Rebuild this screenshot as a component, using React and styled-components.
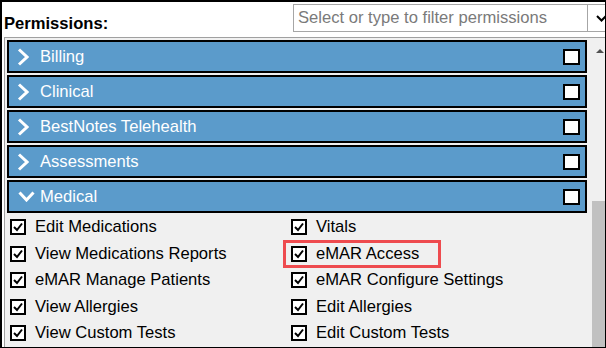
import React from "react";
import styled, { createGlobalStyle } from "styled-components";

const GlobalStyle = createGlobalStyle`
  html, body {
    margin: 0;
    padding: 0;
    background: #ffffff;
  }
  body {
    font-family: "Liberation Sans", Arial, sans-serif;
  }
`;

const groups = ["Billing", "Clinical", "BestNotes Telehealth", "Assessments"];

const medical = [
  { label: "Edit Medications" },
  { label: "Vitals" },
  { label: "View Medications Reports" },
  { label: "eMAR Access", highlight: true },
  { label: "eMAR Manage Patients" },
  { label: "eMAR Configure Settings" },
  { label: "View Allergies" },
  { label: "Edit Allergies" },
  { label: "View Custom Tests" },
  { label: "Edit Custom Tests" },
];

const App = () => {
  return (
    <>
      <GlobalStyle />
      <Frame>
        <TopBar>
          <Label>Permissions:</Label>
          <Select>
            <Placeholder>Select or type to filter permissions</Placeholder>
            <DropButton>
              <svg width="11" height="7" viewBox="0 0 11 7">
                <polyline points="1,1 5.5,5.5 10,1" fill="none" stroke="#000" strokeWidth="2" />
              </svg>
            </DropButton>
          </Select>
        </TopBar>

        <Panel>
          <List>
            {groups.map((g) => (
              <GroupHeader key={g}>
                <Chevron>
                  <svg width="12" height="18" viewBox="0 0 12 18">
                    <polyline points="2,1.5 10,9 2,16.5" fill="none" stroke="#fff" strokeWidth="3" />
                  </svg>
                </Chevron>
                <GroupTitle>{g}</GroupTitle>
                <HeaderBox />
              </GroupHeader>
            ))}

            <GroupHeader>
              <Chevron $open>
                <svg width="17" height="11" viewBox="0 0 17 11">
                  <polyline points="1.5,1.5 8.5,9 15.5,1.5" fill="none" stroke="#fff" strokeWidth="3" />
                </svg>
              </Chevron>
              <GroupTitle>Medical</GroupTitle>
              <HeaderBox />
            </GroupHeader>

            <Items>
              {medical.map((m) => (
                <Item key={m.label} $highlight={m.highlight}>
                  <Check>
                    <svg width="12" height="12" viewBox="0 0 12 12">
                      <polyline points="2,6 5,9 10,2.5" fill="none" stroke="#000" strokeWidth="2" />
                    </svg>
                  </Check>
                  <span>{m.label}</span>
                </Item>
              ))}
            </Items>
          </List>

          <ScrollBar>
            <ScrollArrow />
            <Thumb />
          </ScrollBar>
        </Panel>
      </Frame>
    </>
  );
};

const Frame = styled.div`
  width: 606px;
  height: 348px;
  box-sizing: border-box;
  border-style: solid;
  border-color: #000;
  border-width: 2px 1px 1px 2px;
  overflow: hidden;
  display: flex;
  flex-direction: column;
  background: #fff;
`;

const TopBar = styled.div`
  height: 35px;
  flex-shrink: 0;
  display: flex;
  align-items: flex-start;
  overflow: hidden;
`;

const Label = styled.div`
  width: 289px;
  flex-shrink: 0;
  padding: 13px 0 0 2px;
  font-size: 16.6px;
  line-height: 18px;
  font-weight: bold;
  color: #000;
`;

const Select = styled.div`
  margin-top: 2px;
  width: 330px;
  height: 28px;
  flex-shrink: 0;
  box-sizing: border-box;
  border: 1px solid #a6a6a6;
  display: flex;
  align-items: stretch;
`;

const Placeholder = styled.div`
  width: 293px;
  box-sizing: border-box;
  padding-left: 4px;
  display: flex;
  align-items: center;
  font-size: 16.6px;
  color: #7a7a7a;
  white-space: nowrap;
  overflow: hidden;
`;

const DropButton = styled.div`
  border-left: 1px solid #a6a6a6;
  padding-left: 8px;
  display: flex;
  align-items: center;
`;

const Panel = styled.div`
  flex: 1;
  margin-left: 2px;
  border-top: 1px solid #a0a0a0;
  border-left: 1px solid #a0a0a0;
  padding-left: 2px;
  background: #f0f0f0;
  display: grid;
  grid-template-columns: 580px 13px;
  column-gap: 5px;
  min-height: 0;
`;

const List = styled.div`
  padding-top: 2px;
  overflow: hidden;
`;

const GroupHeader = styled.div`
  height: 33px;
  box-sizing: border-box;
  margin-bottom: 2px;
  border: 2px solid #000;
  background: #5b9bcb;
  display: flex;
  align-items: center;
  padding: 0 5px 0 8px;
  color: #fff;
`;

const Chevron = styled.div`
  width: 23px;
  flex-shrink: 0;
  display: flex;
  align-items: center;
  padding-left: ${(p) => (p.$open ? "1px" : "0")};
  box-sizing: border-box;
  svg {
    display: block;
  }
`;

const GroupTitle = styled.div`
  flex: 1;
  font-size: 16.6px;
  line-height: 18px;
`;

const HeaderBox = styled.div`
  width: 17px;
  height: 16px;
  box-sizing: border-box;
  border: 2px solid #000;
  background: #fff;
`;

const Items = styled.div`
  display: grid;
  grid-template-columns: 281px 1fr;
  grid-auto-rows: 26.5px;
  padding-left: 3px;
  margin-top: -1px;
`;

const Item = styled.div`
  position: relative;
  display: flex;
  align-items: center;
  gap: 9px;
  font-size: 16.6px;
  color: #000;
  white-space: nowrap;

  ${(p) =>
    p.$highlight &&
    `
    &::after {
      content: "";
      position: absolute;
      left: -8px;
      top: -1px;
      width: 158px;
      height: 28px;
      box-sizing: border-box;
      border: 3px solid #ee4b4f;
    }
  `}
`;

const Check = styled.div`
  width: 16px;
  height: 16px;
  box-sizing: border-box;
  border: 2px solid #000;
  background: #fff;
  display: flex;
  align-items: center;
  justify-content: center;
  flex-shrink: 0;
  svg {
    display: block;
  }
`;

const ScrollBar = styled.div`
  display: flex;
  flex-direction: column;
  background: #f0f0f0;
`;

const ScrollArrow = styled.div`
  height: 26px;
  display: flex;
  align-items: center;
  justify-content: center;
  &::before {
    content: "";
    border-left: 4px solid transparent;
    border-right: 4px solid transparent;
    border-bottom: 4px solid #505050;
    margin-left: 3px;
  }
`;

const Thumb = styled.div`
  margin-top: auto;
  height: 146px;
  background: #c1c1c1;
`;

export default App;
